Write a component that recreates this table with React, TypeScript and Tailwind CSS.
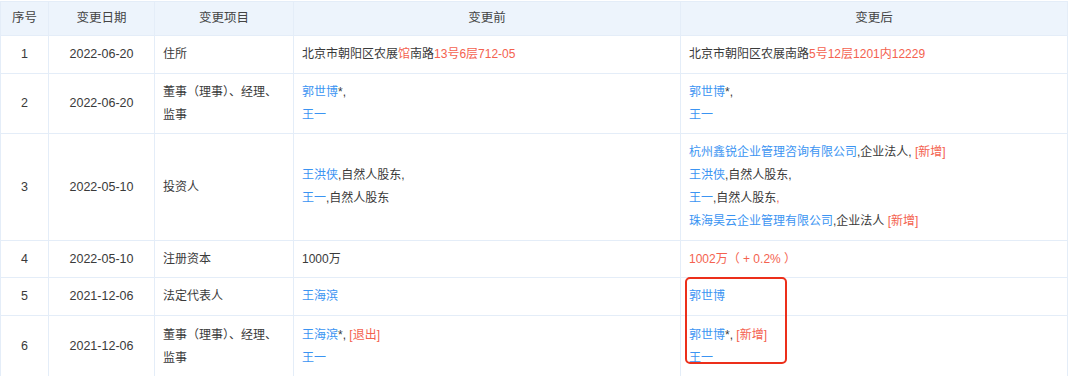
import React from "react";

const B = ({ children }: { children: React.ReactNode }) => (
  <span className="text-[#3b94f2]">{children}</span>
);
const R = ({ children }: { children: React.ReactNode }) => (
  <span className="text-[#f4624f]">{children}</span>
);
const L = ({ children }: { children: React.ReactNode }) => (
  <div className="leading-[23px] whitespace-nowrap">{children}</div>
);

type Row = { h: string; n: string; d: string; item: React.ReactNode; before: React.ReactNode; after: React.ReactNode };

const rows: Row[] = [
  {
    h: "h-[38px]",
    n: "1",
    d: "2022-06-20",
    item: <L>住所</L>,
    before: (
      <L>
        北京市朝阳区农展<R>馆</R>南路<R>13号6层712-05</R>
      </L>
    ),
    after: (
      <L>
        北京市朝阳区农展南路<R>5号12层1201内12229</R>
      </L>
    ),
  },
  {
    h: "h-[60px]",
    n: "2",
    d: "2022-06-20",
    item: (
      <>
        <L>董事（理事）、经理、</L>
        <L>监事</L>
      </>
    ),
    before: (
      <>
        <L>
          <B>郭世博</B>*,
        </L>
        <L>
          <B>王一</B>
        </L>
      </>
    ),
    after: (
      <>
        <L>
          <B>郭世博</B>*,
        </L>
        <L>
          <B>王一</B>
        </L>
      </>
    ),
  },
  {
    h: "h-[107px]",
    n: "3",
    d: "2022-05-10",
    item: <L>投资人</L>,
    before: (
      <>
        <L>
          <B>王洪侠</B>,自然人股东,
        </L>
        <L>
          <B>王一</B>,自然人股东
        </L>
      </>
    ),
    after: (
      <>
        <L>
          <B>杭州鑫锐企业管理咨询有限公司</B>,企业法人, <R>[新增]</R>
        </L>
        <L>
          <B>王洪侠</B>,自然人股东,
        </L>
        <L>
          <B>王一</B>,自然人股东<R>,</R>
        </L>
        <L>
          <B>珠海昊云企业管理有限公司</B>,企业法人 <R>[新增]</R>
        </L>
      </>
    ),
  },
  {
    h: "h-[37px]",
    n: "4",
    d: "2022-05-10",
    item: <L>注册资本</L>,
    before: <L>1000万</L>,
    after: (
      <L>
        <R>1002万（ + 0.2% ）</R>
      </L>
    ),
  },
  {
    h: "h-[38px]",
    n: "5",
    d: "2021-12-06",
    item: <L>法定代表人</L>,
    before: (
      <L>
        <B>王海滨</B>
      </L>
    ),
    after: (
      <L>
        <B>郭世博</B>
      </L>
    ),
  },
  {
    h: "h-[62px]",
    n: "6",
    d: "2021-12-06",
    item: (
      <>
        <L>董事（理事）、经理、</L>
        <L>监事</L>
      </>
    ),
    before: (
      <>
        <L>
          <B>王海滨</B>*, <R>[退出]</R>
        </L>
        <L>
          <B>王一</B>
        </L>
      </>
    ),
    after: (
      <>
        <L>
          <B>郭世博</B>*, <R>[新增]</R>
        </L>
        <L>
          <B>王一</B>
        </L>
      </>
    ),
  },
];

export default function App() {
  const cell = "border border-[#e4edf8] align-middle";
  return (
    <div
      className="relative w-[1080px] h-[376px] overflow-hidden bg-white pt-px text-[12px] text-[#3a3a3a]"
      style={{ fontFamily: '"Liberation Sans", "Noto Sans CJK SC", sans-serif' }}
    >
      <table className="w-[1067px] border-collapse table-fixed">
        <colgroup>
          <col className="w-[48px]" />
          <col className="w-[106px]" />
          <col className="w-[139px]" />
          <col className="w-[387px]" />
          <col className="w-[387px]" />
        </colgroup>
        <thead>
          <tr className="h-[34px] bg-[#edf4fc] text-[#444] text-[12.5px]">
            <th className={`${cell} font-normal text-center`}>序号</th>
            <th className={`${cell} font-normal text-center`}>变更日期</th>
            <th className={`${cell} font-normal text-center`}>变更项目</th>
            <th className={`${cell} font-normal text-center`}>变更前</th>
            <th className={`${cell} font-normal text-center`}>变更后</th>
          </tr>
        </thead>
        <tbody>
          {rows.map((r) => (
            <tr key={r.n} className={r.h}>
              <td className={`${cell} text-center text-[12.5px]`}>{r.n}</td>
              <td className={`${cell} text-center text-[12.5px]`}>{r.d}</td>
              <td className={`${cell} px-2`}>{r.item}</td>
              <td className={`${cell} px-2`}>{r.before}</td>
              <td className={`${cell} px-2`}>{r.after}</td>
            </tr>
          ))}
        </tbody>
      </table>
      <div className="absolute left-[685px] top-[277px] w-[102px] h-[87px] border-2 border-[#ec2f1a] rounded-[5px] pointer-events-none" />
    </div>
  );
}
